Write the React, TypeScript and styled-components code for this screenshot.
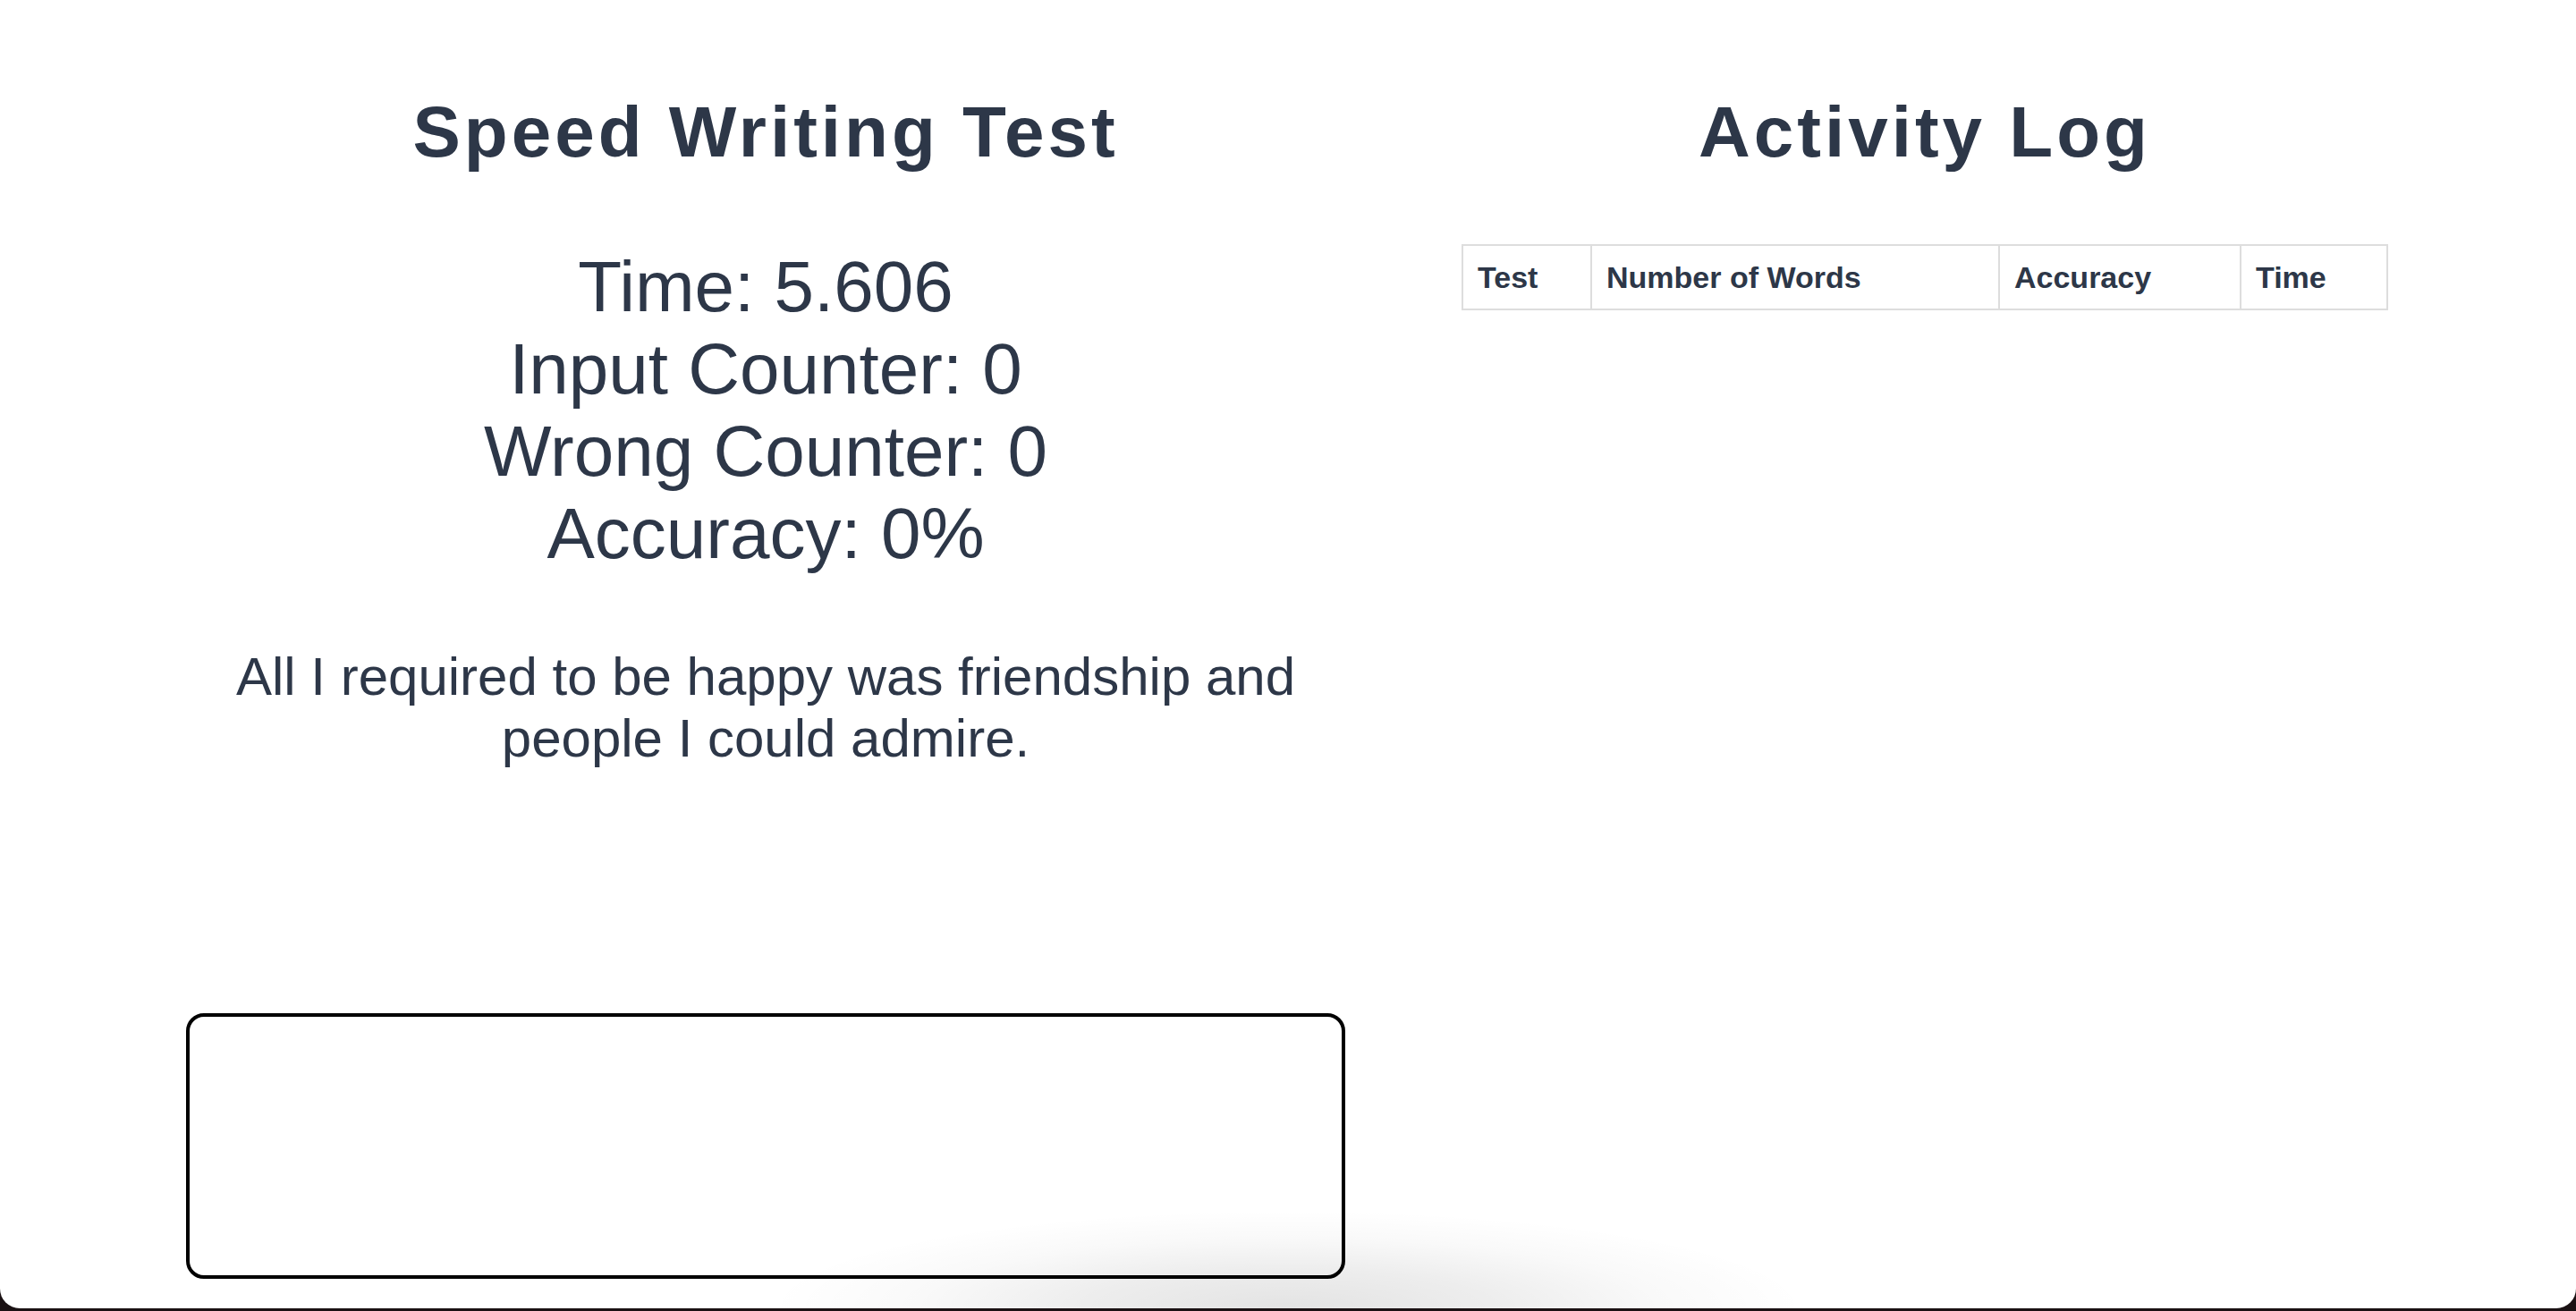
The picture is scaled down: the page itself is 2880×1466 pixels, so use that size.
import React from "react";
import styled, { createGlobalStyle } from "styled-components";

const GlobalStyle = createGlobalStyle`
  html, body {
    margin: 0;
    padding: 0;
    background: #1a1113;
  }
  body {
    font-family: "Liberation Sans", Arial, Helvetica, sans-serif;
    color: #2d3748;
  }
  * { box-sizing: border-box; }
`;

const Window = styled.div`
  position: relative;
  height: 1463px;
  background: #ffffff;
  border-radius: 0 0 22px 22px;
  overflow: hidden;
  padding-top: 102px;
`;

const Columns = styled.main`
  display: grid;
  grid-template-columns: 1296px 1296px;
  padding-left: 208px;
`;

const Panel = styled.section`
  display: flex;
  flex-direction: column;
  align-items: center;
  text-align: center;
`;

const Title = styled.h1`
  margin: 0;
  font-size: 80px;
  line-height: 92px;
  font-weight: 700;
  letter-spacing: 4px;
  color: #2d3748;
`;

const Stats = styled.div`
  margin-top: 81px;
  display: flex;
  flex-direction: column;
  align-items: center;
`;

const StatLine = styled.div`
  font-size: 80px;
  line-height: 92px;
  font-weight: 400;
  color: #2d3748;
`;

const Sentence = styled.p`
  margin: 79px 0 0;
  width: 100%;
  font-size: 60px;
  line-height: 69px;
  color: #2d3748;
`;

const TypingArea = styled.textarea`
  margin-top: 273px;
  width: 100%;
  height: 297px;
  border: 4px solid #000;
  border-radius: 20px;
  background: transparent;
  resize: none;
  outline: none;
  font-family: "Liberation Sans", Arial, sans-serif;
  font-size: 32px;
`;

const LogTable = styled.table`
  margin-top: 79px;
  width: 1034px;
  border-collapse: collapse;
  table-layout: fixed;
  border: 2px solid #dddddd;
`;

const HeadCell = styled.th<{ $w: number }>`
  width: ${(p) => p.$w}px;
  border: 2px solid #dddddd;
  padding: 17px 16px 16px;
  text-align: left;
  font-size: 34px;
  line-height: 37px;
  font-weight: 700;
  color: #2d3748;
`;

const DockShadow = styled.div`
  position: absolute;
  left: 50%;
  bottom: 0;
  width: 1160px;
  height: 110px;
  transform: translateX(-50%);
  pointer-events: none;
  background: radial-gradient(
    ellipse 50% 100% at 50% 100%,
    rgba(0, 0, 0, 0.11) 0%,
    rgba(0, 0, 0, 0.07) 40%,
    rgba(0, 0, 0, 0.025) 72%,
    rgba(0, 0, 0, 0) 100%
  );
`;

const stats = [
  "Time: 5.606",
  "Input Counter: 0",
  "Wrong Counter: 0",
  "Accuracy: 0%",
];

const columns: { label: string; w: number }[] = [
  { label: "Test", w: 144 },
  { label: "Number of Words", w: 456 },
  { label: "Accuracy", w: 270 },
  { label: "Time", w: 164 },
];

export default function App() {
  return (
    <>
      <GlobalStyle />
      <Window>
        <Columns>
          <Panel>
            <Title>Speed Writing Test</Title>
            <Stats>
              {stats.map((s) => (
                <StatLine key={s}>{s}</StatLine>
              ))}
            </Stats>
            <Sentence>
              All I required to be happy was friendship and people I could admire.
            </Sentence>
            <TypingArea aria-label="Type here" />
          </Panel>
          <Panel>
            <Title>Activity Log</Title>
            <LogTable>
              <thead>
                <tr>
                  {columns.map((c) => (
                    <HeadCell key={c.label} $w={c.w}>
                      {c.label}
                    </HeadCell>
                  ))}
                </tr>
              </thead>
            </LogTable>
          </Panel>
        </Columns>
        <DockShadow />
      </Window>
    </>
  );
}
